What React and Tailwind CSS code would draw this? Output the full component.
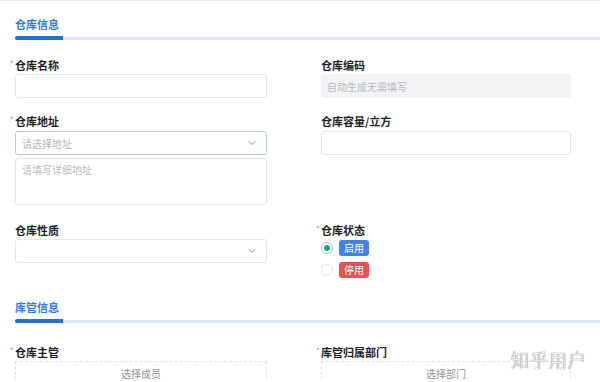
import React, { useState } from 'react';
import { FiChevronDown } from 'react-icons/fi';

const font = { fontFamily: '"Noto Sans CJK SC", "Noto Sans", sans-serif' };

const SectionTitle = ({ title }) => (
  <div className="pl-[15px]">
    <div className="h-[16px] text-[11px] leading-[16px] font-bold text-[#2f7de1]">{title}</div>
    <div className="relative mt-[4px] h-[4px]">
      <div className="absolute left-0 right-0 top-[1px] h-[3px] bg-[#d9e8f7]" />
      <div className="absolute left-0 top-0 h-[4px] w-[48px] rounded-l-full rounded-r-[3px] bg-[#1a73e0]" />
    </div>
  </div>
);

const Label = ({ text, required }) => (
  <div className="relative h-[14px] text-[11px] leading-[14px] font-bold text-[#1f1f1f]">
    {required && (
      <span className="absolute left-[-5px] top-[-1px] text-[8px] font-normal text-[#f56c6c]">*</span>
    )}
    {text}
  </div>
);

const Select = ({ placeholder, focused }) => (
  <div
    className={
      focused
        ? 'flex h-[24px] items-center justify-between rounded-[3px] border border-[#a9d6cf] bg-white px-[6px]'
        : 'flex h-[24px] items-center justify-between rounded-[3px] border border-[#e4e6ea] bg-white px-[6px]'
    }
  >
    <span className="text-[10px] text-[#b5b8bd]">{placeholder}</span>
    <FiChevronDown className="mr-[2px] text-[12px] text-[#8c9096]" />
  </div>
);

const App = () => {
  const [status, setStatus] = useState('on');

  return (
    <div className="h-[382px] w-[600px] overflow-hidden border-t border-[#ececec] bg-white" style={font}>
      <div className="pt-[15px]">
        <SectionTitle title="仓库信息" />
      </div>

      <div className="mt-[18px] grid grid-cols-[252px_250px] gap-x-[54px] px-[15px]">
        {/* 仓库名称 / 仓库编码 */}
        <div>
          <Label text="仓库名称" required />
          <div className="mt-[2px] h-[24px] rounded-[3px] border border-[#e4e6ea] bg-white" />
        </div>
        <div>
          <Label text="仓库编码" />
          <div className="mt-[2px] flex h-[24px] items-center rounded-[3px] bg-[#f2f3f5] px-[6px] text-[10px] text-[#b9bcc1]">
            自动生成无需填写
          </div>
        </div>

        {/* 仓库地址 / 仓库容量 */}
        <div className="mt-[16px]">
          <Label text="仓库地址" required />
          <div className="mt-[3px]">
            <Select placeholder="请选择地址" focused />
          </div>
          <div className="mt-[3px] h-[47px] rounded-[3px] border border-[#e4e6ea] px-[6px] pt-[4px] text-[10px] leading-[14px] text-[#b9bcc1]">
            请填写详细地址
          </div>
        </div>
        <div className="mt-[16px]">
          <Label text="仓库容量/立方" />
          <div className="mt-[3px] h-[24px] rounded-[3px] border border-[#e4e6ea] bg-white" />
        </div>

        {/* 仓库性质 / 仓库状态 */}
        <div className="mt-[18px]">
          <Label text="仓库性质" />
          <div className="mt-[2px]">
            <Select placeholder="" />
          </div>
        </div>
        <div className="mt-[18px]">
          <Label text="仓库状态" required />
          <div className="mt-[3px] flex flex-col gap-[6px]">
            {[
              { key: 'on', text: '启用', color: 'bg-[#3f83e8]' },
              { key: 'off', text: '停用', color: 'bg-[#ec5151]' },
            ].map((item) => (
              <div key={item.key} className="flex items-center gap-[6px]" onClick={() => setStatus(item.key)}>
                <span
                  className={
                    status === item.key
                      ? 'flex h-[12px] w-[12px] items-center justify-center rounded-full border border-[#7fcdbd] bg-white'
                      : 'flex h-[12px] w-[12px] items-center justify-center rounded-full border border-[#e6e6e6] bg-white'
                  }
                >
                  {status === item.key && <span className="h-[6px] w-[6px] rounded-full bg-[#1fa68a]" />}
                </span>
                <span className={`${item.color} rounded-[3px] px-[5px] text-[10px] leading-[16px] text-white`}>
                  {item.text}
                </span>
              </div>
            ))}
          </div>
        </div>
      </div>

      <div className="mt-[21px]">
        <SectionTitle title="库管信息" />
      </div>

      <div className="mt-[22px] grid grid-cols-[252px_250px] gap-x-[54px] px-[15px]">
        <div>
          <Label text="仓库主管" required />
          <div className="mt-[2px] flex h-[24px] items-center justify-center border border-dashed border-[#e2e4e8] text-[10px] text-[#8f9399]">
            选择成员
          </div>
        </div>
        <div>
          <Label text="库管归属部门" required />
          <div className="relative mt-[2px] flex h-[24px] items-center justify-center border border-dashed border-[#e2e4e8] text-[10px] text-[#8f9399]">
            选择部门
            <span
              className="absolute left-[189px] top-[-14px] whitespace-nowrap text-[18px] font-light leading-[22px] tracking-[1px] text-white"
              style={{ textShadow: '0 0 1px #666, 0 0 1px #666' }}
            >
              知乎用户
            </span>
          </div>
        </div>
      </div>
    </div>
  );
};

export default App;
